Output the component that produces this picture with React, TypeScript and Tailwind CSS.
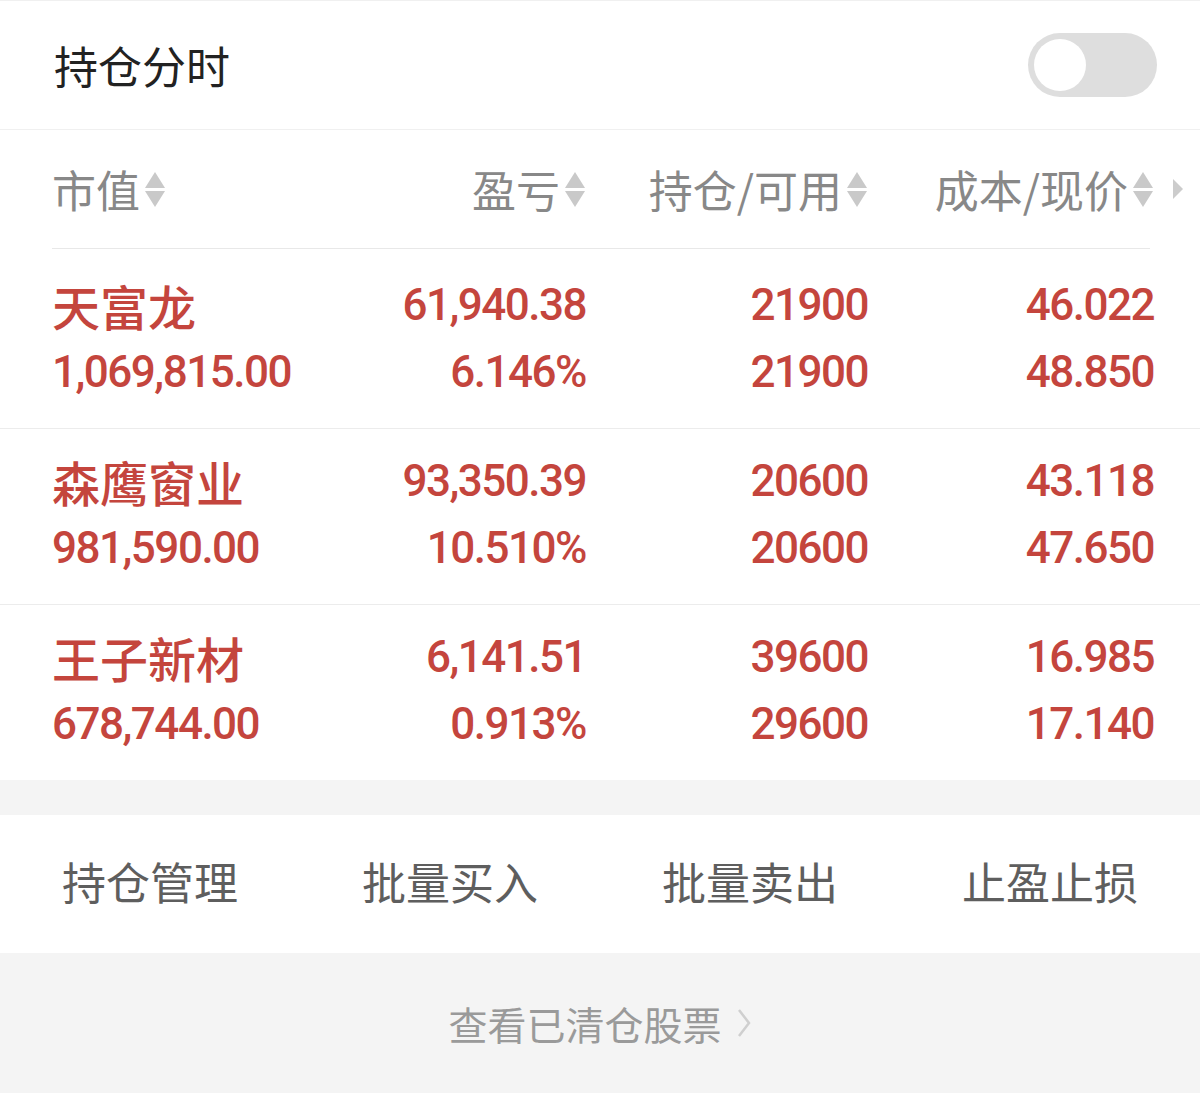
import React from 'react';

const cjk = "font-['Noto_Sans_CJK_SC',sans-serif]";
const num = "font-['Roboto','Noto_Sans_CJK_SC',sans-serif] font-medium text-[44px] leading-[66px] tracking-[-1.5px]";

type Holding = {
  name: string;
  value: string;
  pnl: string;
  pnlPct: string;
  hold: string;
  avail: string;
  cost: string;
  price: string;
};

const holdings: Holding[] = [
  { name: '天富龙', value: '1,069,815.00', pnl: '61,940.38', pnlPct: '6.146%', hold: '21900', avail: '21900', cost: '46.022', price: '48.850' },
  { name: '森鹰窗业', value: '981,590.00', pnl: '93,350.39', pnlPct: '10.510%', hold: '20600', avail: '20600', cost: '43.118', price: '47.650' },
  { name: '王子新材', value: '678,744.00', pnl: '6,141.51', pnlPct: '0.913%', hold: '39600', avail: '29600', cost: '16.985', price: '17.140' },
];

function SortIcon() {
  return (
    <svg width="22" height="37" viewBox="0 0 22 37" className="ml-[4px] shrink-0">
      <polygon points="11,1 21,17 1,17" fill="#c9c9c9" />
      <polygon points="1,20 21,20 11,36" fill="#c9c9c9" />
    </svg>
  );
}

function HeadCell({ label, right }: { label: string; right?: boolean }) {
  return (
    <div className={`flex items-center ${right ? 'justify-end' : ''}`}>
      <span className="text-[44px] leading-none text-[#888]">{label}</span>
      <SortIcon />
    </div>
  );
}

export default function App() {
  return (
    <div className={`w-[1200px] h-[1093px] bg-[#f4f4f4] ${cjk}`}>
      {/* title bar */}
      <div className="h-[130px] bg-white border-t border-[#f0f0f0] border-b flex items-center justify-between pl-[54px] pr-[43px]">
        <span className="text-[44px] leading-none text-[#222]">持仓分时</span>
        <div className="w-[129px] h-[64px] rounded-full bg-[#dedede] p-[6px] flex items-center">
          <div className="w-[52px] h-[52px] rounded-full bg-white" />
        </div>
      </div>

      {/* column header */}
      <div className="bg-white">
        <div className="h-[118px] flex items-center pl-[52px]">
          <div className="grid grid-cols-[254px_280px_282px_286px] items-center">
            <HeadCell label="市值" />
            <HeadCell label="盈亏" right />
            <HeadCell label="持仓/可用" right />
            <HeadCell label="成本/现价" right />
          </div>
          <svg width="12" height="22" viewBox="0 0 12 22" className="ml-[18px]">
            <polygon points="1,1 11,11 1,21" fill="#cccccc" />
          </svg>
        </div>
        <div className="ml-[52px] mr-[50px] h-px bg-[#e8e8e8]" />

        {holdings.map((h, i) => (
          <div
            key={h.name}
            className={`pl-[52px] grid grid-cols-[254px_280px_282px_286px] gap-y-px text-[#c4453d] ${
              i === 0 ? 'pt-[23px] pb-[23px]' : 'pt-[19px] pb-[23px]'
            } ${i < holdings.length - 1 ? 'border-b border-[#ececec]' : ''}`}
          >
            <div className="text-[48px] leading-[66px] font-medium whitespace-nowrap">{h.name}</div>
            <div className={`${num} text-right`}>{h.pnl}</div>
            <div className={`${num} text-right`}>{h.hold}</div>
            <div className={`${num} text-right`}>{h.cost}</div>
            <div className={`${num} whitespace-nowrap`}>{h.value}</div>
            <div className={`${num} text-right`}>{h.pnlPct}</div>
            <div className={`${num} text-right`}>{h.avail}</div>
            <div className={`${num} text-right`}>{h.price}</div>
          </div>
        ))}
      </div>

      {/* actions */}
      <div className="mt-[35px] h-[138px] bg-white grid grid-cols-4 items-center">
        {['持仓管理', '批量买入', '批量卖出', '止盈止损'].map((t) => (
          <div key={t} className="text-center text-[44px] leading-none text-[#5e5e5e] pb-[6px]">
            {t}
          </div>
        ))}
      </div>

      {/* closed positions */}
      <div className="h-[140px] flex items-center justify-center">
        <span className="text-[39px] leading-none text-[#9a9a9a]">查看已清仓股票</span>
        <svg width="16" height="30" viewBox="0 0 16 30" className="ml-[14px]">
          <polyline points="3,2 13,15 3,28" fill="none" stroke="#cfcfcf" strokeWidth="2.5" />
        </svg>
      </div>
    </div>
  );
}
